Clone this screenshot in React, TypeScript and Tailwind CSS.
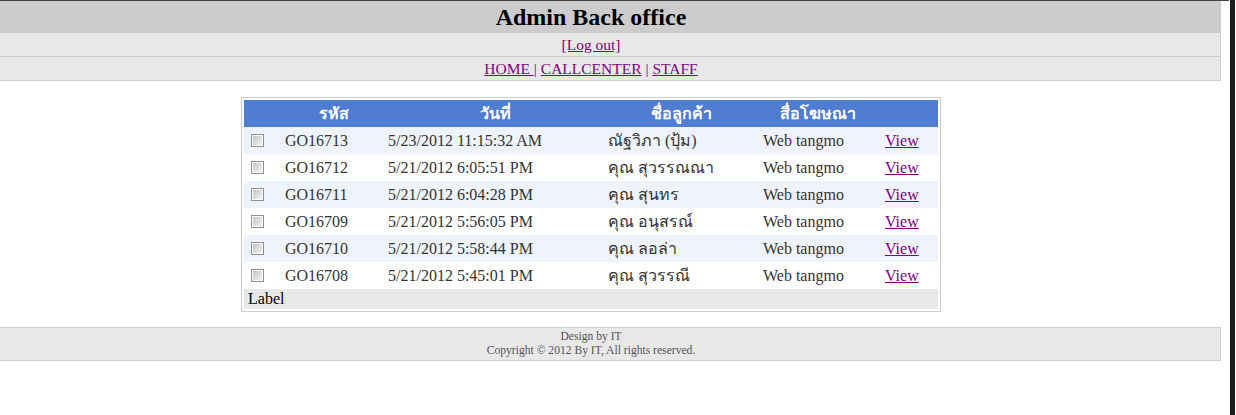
const rows = [
  { code: 'GO16713', date: '5/23/2012 11:15:32 AM', name: 'ณัฐวิภา (ปุ้ม)', media: 'Web tangmo' },
  { code: 'GO16712', date: '5/21/2012 6:05:51 PM', name: 'คุณ สุวรรณณา', media: 'Web tangmo' },
  { code: 'GO16711', date: '5/21/2012 6:04:28 PM', name: 'คุณ สุนทร', media: 'Web tangmo' },
  { code: 'GO16709', date: '5/21/2012 5:56:05 PM', name: 'คุณ อนุสรณ์', media: 'Web tangmo' },
  { code: 'GO16710', date: '5/21/2012 5:58:44 PM', name: 'คุณ ลอล่า', media: 'Web tangmo' },
  { code: 'GO16708', date: '5/21/2012 5:45:01 PM', name: 'คุณ สุวรรณี', media: 'Web tangmo' },
]

function CheckBox() {
  return (
    <div className="w-[13px] h-[13px] border border-[#8f8f8f] bg-white p-px">
      <div className="w-full h-full bg-gradient-to-br from-[#c4c4c4] to-[#f4f4f4]" />
    </div>
  )
}

export default function App() {
  return (
    <div className="flex h-[415px] w-full bg-white font-['Liberation_Serif','DejaVu_Serif',serif] text-black">
      <div className="w-[1230px] flex flex-col">
        {/* Top line */}
        <div className="h-px w-[1229px] bg-[#444]" />

        {/* Header */}
        <div className="w-[1221px] h-[32px] bg-[#cccccc] flex items-center">
          <h1 className="w-[1182px] text-center text-[24px] font-bold leading-none">Admin Back office</h1>
        </div>
        <div className="w-[1221px] h-[24px] bg-[#e8e8e8] border-b border-r border-[#cccccc] flex items-center">
          <div className="w-[1182px] text-center text-[15.5px] leading-none">
            <a href="#" className="text-[#800080] underline">[Log out]</a>
          </div>
        </div>
        <div className="w-[1221px] h-[24px] bg-[#e8e8e8] border-b border-r border-[#cccccc] flex items-center">
          <div className="w-[1182px] text-center text-[15.5px] leading-none text-[#800080]">
            <a href="#" className="underline">HOME </a>|{' '}
            <a href="#" className="underline">CALLCENTER</a> |{' '}
            <a href="#" className="underline">STAFF</a>
          </div>
        </div>

        {/* Table */}
        <div className="w-[1182px] mt-[16px]">
          <div className="mx-auto w-[700px] border border-[#cccccc] p-[2px]">
            <div className="flex h-[27px] bg-[#507cd1] text-white font-bold text-[16px] items-center">
              <div className="w-[39px]" />
              <div className="w-[101px] text-center">รหัส</div>
              <div className="w-[222px] text-center">วันที่</div>
              <div className="w-[151px] text-center">ชื่อลูกค้า</div>
              <div className="w-[122px] text-center">สื่อโฆษณา</div>
              <div className="flex-1" />
            </div>
            {rows.map((r, i) => (
              <div
                key={r.code}
                className={`flex h-[27px] items-center text-[16px] text-[#333333] ${i % 2 === 0 ? 'bg-[#eff3fb]' : 'bg-white'}`}
              >
                <div className="w-[39px] pl-[7px]">
                  <CheckBox />
                </div>
                <div className="w-[101px] pl-[2px]">{r.code}</div>
                <div className="w-[222px] pl-[4px]">{r.date}</div>
                <div className="w-[151px] pl-[2px]">{r.name}</div>
                <div className="w-[122px] pl-[6px]">{r.media}</div>
                <div className="flex-1 pl-[6px]">
                  <a href="#" className="text-[#800080] underline">View</a>
                </div>
              </div>
            ))}
            <div className="h-[20px] bg-[#e8e8e8] flex items-center pl-[4px] text-[16px]">Label</div>
          </div>
        </div>

        {/* Footer */}
        <div className="w-[1221px] mt-[15px] h-[34px] bg-[#e8e8e8] border-y border-r border-[#cccccc] flex flex-col justify-center">
          <div className="w-[1182px] text-center text-[11.6px] leading-[14px] text-[#555555]">
            <div>Design by IT</div>
            <div>Copyright © 2012 By IT, All rights reserved.</div>
          </div>
        </div>
      </div>

      {/* Window edge */}
      <div className="w-[5px] h-full bg-[#1c1c1c]" />
      <div className="flex-1 h-full bg-white" />
    </div>
  )
}
